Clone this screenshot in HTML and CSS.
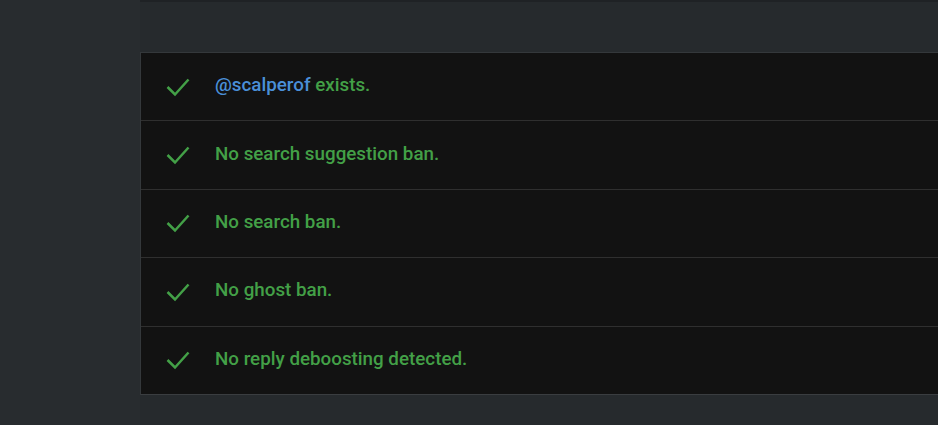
FILE: index.html
```html
<!DOCTYPE html>
<html>
<head>
<meta charset="utf-8">
<link rel="stylesheet" href="styles.css">
</head>
<body>
<div class="page">
  <aside class="side"></aside>
  <main class="main">
    <div class="topbar"></div>
    <ul class="card">
      <li class="row">
        <svg class="check" viewBox="0 0 24 20"><polyline points="1.5,10 9,17.5 22.5,2.5"/></svg>
        <span class="msg"><a class="user">@scalperof</a> exists.</span>
      </li>
      <li class="row">
        <svg class="check" viewBox="0 0 24 20"><polyline points="1.5,10 9,17.5 22.5,2.5"/></svg>
        <span class="msg">No search suggestion ban.</span>
      </li>
      <li class="row">
        <svg class="check" viewBox="0 0 24 20"><polyline points="1.5,10 9,17.5 22.5,2.5"/></svg>
        <span class="msg">No search ban.</span>
      </li>
      <li class="row">
        <svg class="check" viewBox="0 0 24 20"><polyline points="1.5,10 9,17.5 22.5,2.5"/></svg>
        <span class="msg">No ghost ban.</span>
      </li>
      <li class="row">
        <svg class="check" viewBox="0 0 24 20"><polyline points="1.5,10 9,17.5 22.5,2.5"/></svg>
        <span class="msg">No reply deboosting detected.</span>
      </li>
    </ul>
  </main>
</div>
</body>
</html>
```
FILE: styles.css
```css
html, body {
  margin: 0;
  padding: 0;
  height: 100%;
  overflow: hidden;
  background: #262a2d;
  font-family: Roboto, "Noto Sans", sans-serif;
}
.page {
  display: flex;
  height: 425px;
}
.side {
  width: 140px;
  flex: none;
  background: #282c2f;
}
.main {
  flex: 1;
  background: #262a2d;
  min-width: 0;
}
.topbar {
  height: 2px;
  background: #1f2225;
  margin-bottom: 50px;
}
.card {
  list-style: none;
  margin: 0 -40px 0 0;
  padding: 0;
  background: #121212;
  border-top: 1px solid #34383b;
  border-left: 1px solid #34383b;
  border-bottom: 1px solid #3a3d40;
}
.row {
  display: flex;
  align-items: center;
  box-sizing: border-box;
  height: 68.4px;
  border-bottom: 1px solid #2f2f2f;
  padding-left: 25px;
  padding-bottom: 3px;
}
.row:last-child {
  border-bottom: none;
  height: 67.6px;
}
.check {
  width: 24px;
  height: 20px;
  margin-right: 25px;
  margin-top: 3px;
}
.check polyline {
  fill: none;
  stroke: #43a047;
  stroke-width: 2.5;
}
.msg {
  color: #43a047;
  font-size: 18.8px;
  font-weight: 500;
  letter-spacing: 0;
}
.user {
  color: #4a8fd8;
}
```
